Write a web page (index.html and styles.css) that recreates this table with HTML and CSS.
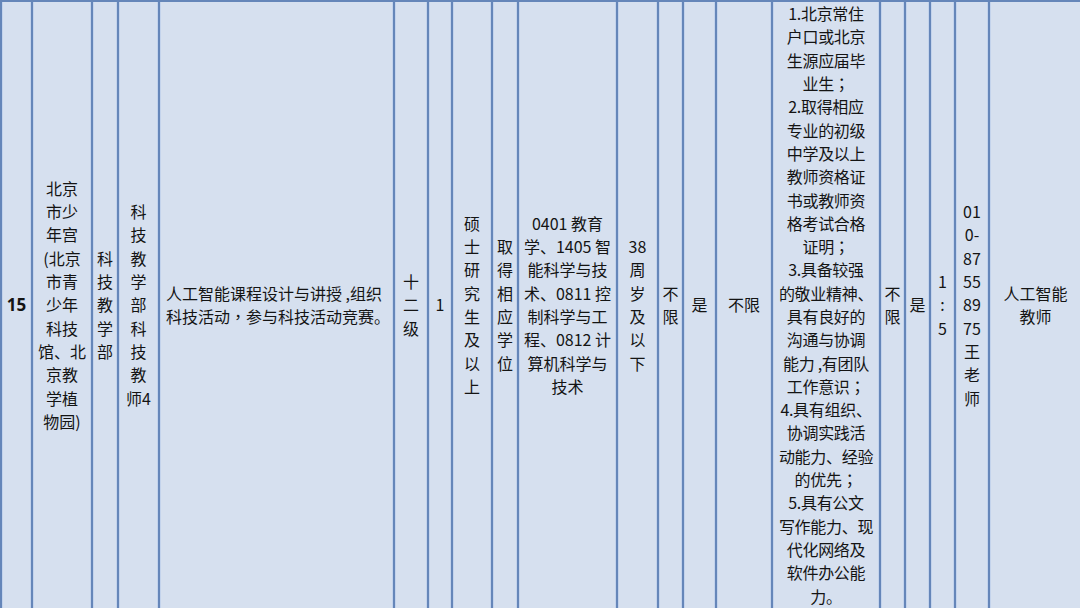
FILE: index.html
```html
<!DOCTYPE html>
<html lang="zh-CN">
<head>
<meta charset="utf-8">
<title>招聘岗位</title>
<link rel="stylesheet" href="styles.css">
</head>
<body>
<table class="grid">
  <colgroup>
    <col class="w31"><col class="w60"><col class="w26"><col class="w41"><col class="w235">
    <col class="w34"><col class="w24"><col class="w40"><col class="w26"><col class="w99">
    <col class="w41"><col class="w25"><col class="w33"><col class="w56"><col class="w108">
    <col class="w25"><col class="w25"><col class="w25"><col class="w34"><col class="w93">
  </colgroup>
  <tr class="row">
    <td class="num">15</td>
    <td>北京<br>市少<br>年宫<br>(北京<br>市青<br>少年<br>科技<br>馆、北<br>京教<br>学植<br>物园)</td>
    <td>科<br>技<br>教<br>学<br>部</td>
    <td>科<br>技<br>教<br>学<br>部<br>科<br>技<br>教<br>师4</td>
    <td class="desc">人工智能课程设计与讲授 ,组织<br>科技活动<span class="p" lang="zh-TW">，</span>参与科技活动竞赛。</td>
    <td>十<br>二<br>级</td>
    <td>1</td>
    <td>硕<br>士<br>研<br>究<br>生<br>及<br>以<br>上</td>
    <td>取<br>得<br>相<br>应<br>学<br>位</td>
    <td>0401 教育<br>学、1405 智<br>能科学与技<br>术、0811 控<br>制科学与工<br>程、0812 计<br>算机科学与<br>技术</td>
    <td>38<br>周<br>岁<br>及<br>以<br>下</td>
    <td>不<br>限</td>
    <td>是</td>
    <td>不限</td>
    <td class="req">1.北京常住<br>户口或北京<br>生源应届毕<br>业生<span class="p" lang="zh-TW">；</span><br>2.取得相应<br>专业的初级<br>中学及以上<br>教师资格证<br>书或教师资<br>格考试合格<br>证明<span class="p" lang="zh-TW">；</span><br>3.具备较强<br>的敬业精神、<br>具有良好的<br>沟通与协调<br>能力 ,有团队<br>工作意识<span class="p" lang="zh-TW">；</span><br>4.具有组织、<br>协调实践活<br>动能力、经验<br>的优先<span class="p" lang="zh-TW">；</span><br>5.具有公文<br>写作能力、现<br>代化网络及<br>软件办公能<br>力。</td>
    <td>不<br>限</td>
    <td>是</td>
    <td>1<br>:<br>5</td>
    <td>01<br>0-<br>87<br>55<br>89<br>75<br>王<br>老<br>师</td>
    <td>人工智能<br>教师</td>
  </tr>
</table>
</body>
</html>
```
FILE: styles.css
```css
html, body {
  margin: 0;
  padding: 0;
  background: #d6e0ef;
}
body {
  width: 1080px;
  height: 608px;
  overflow: hidden;
}
.grid {
  width: 1080px;
  height: 608px;
  table-layout: fixed;
  border-collapse: collapse;
  background: #d6e0ef;
  font-family: "Noto Sans CJK SC", "Noto Sans", sans-serif;
  font-size: 16px;
  line-height: 23.3px;
  color: #141414;
}
.grid td {
  border: 2px solid #6586b9;
  padding: 0;
  text-align: center;
  vertical-align: middle;
  white-space: nowrap;
  overflow: visible;
  box-shadow: inset 1px 0 0 #c3d3ec, inset -1px 0 0 #c3d3ec;
}
.row { height: 608px; }
.num {
  font-family: "Open Sans", "Liberation Sans", sans-serif;
  font-weight: 700;
  font-size: 17px;
}
.grid td.desc {
  text-align: left;
  padding-left: 6px;
}
.p {
  font-family: "Noto Sans CJK TC", "Noto Sans CJK SC", sans-serif;
}
.req { letter-spacing: -0.3px; }
.w24 { width: 24px; }
.w25 { width: 25px; }
.w26 { width: 26px; }
.w31 { width: 31px; }
.w33 { width: 33px; }
.w34 { width: 34px; }
.w40 { width: 40px; }
.w41 { width: 41px; }
.w56 { width: 56px; }
.w60 { width: 60px; }
.w93 { width: 93px; }
.w99 { width: 99px; }
.w108 { width: 108px; }
.w235 { width: 235px; }
```
